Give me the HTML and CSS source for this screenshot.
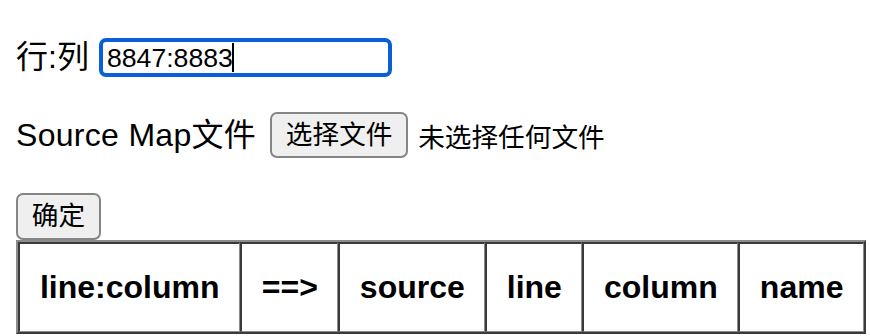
FILE: index.html
```html
<!DOCTYPE html>
<html lang="zh-CN">
<head>
<meta charset="utf-8">
<title>Source Map 解析</title>
<link rel="stylesheet" href="styles.css">
</head>
<body>
<div class="field-row row-pos">
  <span class="label">行:列</span>
  <span class="input-wrap"><input class="pos-input" type="text" value="8847:8883"><span class="caret"></span></span>
</div>
<div class="field-row row-file">
  <span class="label">Source Map文件</span>
  <button class="btn btn-file" type="button">选择文件</button>
  <span class="file-status">未选择任何文件</span>
</div>
<div class="actions">
  <button class="btn btn-ok" type="button">确定</button>
</div>
<table class="result">
  <thead>
    <tr>
      <th>line:column</th>
      <th>==&gt;</th>
      <th>source</th>
      <th>line</th>
      <th>column</th>
      <th>name</th>
    </tr>
  </thead>
</table>
</body>
</html>
```
FILE: styles.css
```css
html, body {
  margin: 0;
  background: #fff;
}
body {
  padding: 38px 16px 0;
  font-family: "Liberation Sans", "Noto Sans CJK SC", sans-serif;
  color: #000;
}
.field-row {
  display: flex;
  align-items: center;
  margin-bottom: 35px;
}
.label {
  font-size: 32px;
  line-height: 39px;
  margin-right: 10px;
}
.row-file .label {
  margin-right: 14px;
  letter-spacing: 0.3px;
}
.input-wrap {
  position: relative;
  display: inline-flex;
}
.pos-input {
  box-sizing: border-box;
  width: 293px;
  height: 39px;
  margin: 0;
  border: 4px solid #0b5fd6;
  border-radius: 7px;
  padding: 1px 4px 0;
  font-family: "Liberation Sans", sans-serif;
  font-size: 26.67px;
  color: #000;
  background: #fff;
  outline: none;
}
.caret {
  position: absolute;
  left: 133px;
  top: 5px;
  width: 2px;
  height: 29px;
  background: #000;
}
.btn {
  box-sizing: border-box;
  margin: 0;
  font-family: "Liberation Sans", "Noto Sans CJK SC", sans-serif;
  font-size: 26.67px;
  line-height: 1;
  color: #000;
  background: #efefef;
  border: 2px solid #858585;
  border-radius: 7px;
  padding: 0 13px;
}
.btn-file {
  width: 138px;
  height: 46px;
}
.btn-ok {
  width: 85px;
  height: 47px;
}
.file-status {
  font-size: 26.67px;
  margin-left: 10px;
}
.actions {
  display: flex;
}
.result {
  width: 850px;
  border-collapse: separate;
  border-spacing: 0;
  border-style: solid;
  border-width: 2px;
  border-color: #8c8c8c #3a3a3a #3a3a3a #8c8c8c;
}
.result th {
  font-size: 32px;
  font-weight: bold;
  line-height: 37px;
  padding: 25px 19px;
  border-style: solid;
  border-width: 2px 1px 1px 2px;
  border-color: #3a3a3a #8c8c8c #8c8c8c #3a3a3a;
}
```
